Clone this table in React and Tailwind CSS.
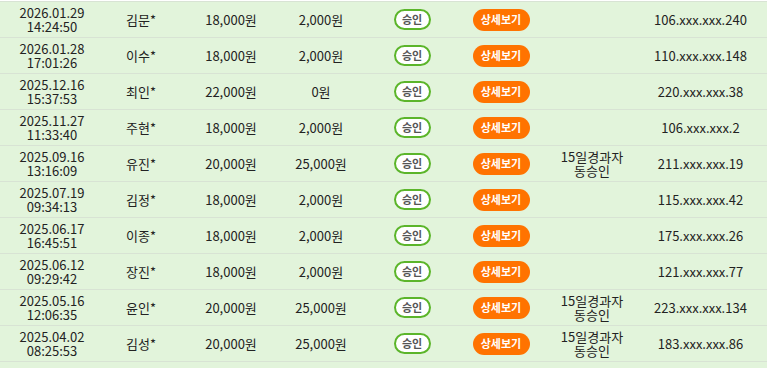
import React from 'react';

const rows = [
  { date: '2026.01.29', time: '14:24:50', name: '김문*', amount: '18,000원', point: '2,000원', note: false, ip: '106.xxx.xxx.240' },
  { date: '2026.01.28', time: '17:01:26', name: '이수*', amount: '18,000원', point: '2,000원', note: false, ip: '110.xxx.xxx.148' },
  { date: '2025.12.16', time: '15:37:53', name: '최인*', amount: '22,000원', point: '0원', note: false, ip: '220.xxx.xxx.38' },
  { date: '2025.11.27', time: '11:33:40', name: '주현*', amount: '18,000원', point: '2,000원', note: false, ip: '106.xxx.xxx.2' },
  { date: '2025.09.16', time: '13:16:09', name: '유진*', amount: '20,000원', point: '25,000원', note: true, ip: '211.xxx.xxx.19' },
  { date: '2025.07.19', time: '09:34:13', name: '김정*', amount: '18,000원', point: '2,000원', note: false, ip: '115.xxx.xxx.42' },
  { date: '2025.06.17', time: '16:45:51', name: '이종*', amount: '18,000원', point: '2,000원', note: false, ip: '175.xxx.xxx.26' },
  { date: '2025.06.12', time: '09:29:42', name: '장진*', amount: '18,000원', point: '2,000원', note: false, ip: '121.xxx.xxx.77' },
  { date: '2025.05.16', time: '12:06:35', name: '윤인*', amount: '20,000원', point: '25,000원', note: true, ip: '223.xxx.xxx.134' },
  { date: '2025.04.02', time: '08:25:53', name: '김성*', amount: '20,000원', point: '25,000원', note: true, ip: '183.xxx.xxx.86' },
];

const Row = ({ row }) => (
  <div className="grid grid-cols-[104px_74px_106px_74px_108px_70px_112px_119px] h-[36px] items-center border-b border-[#d8e3d4] text-center text-[13px] text-[#222]">
    <div className="leading-[14px]">
      <div>{row.date}</div>
      <div>{row.time}</div>
    </div>
    <div>{row.name}</div>
    <div>{row.amount}</div>
    <div>{row.point}</div>
    <div className="flex justify-center">
      <span className="inline-flex items-center justify-center w-[37px] h-[21px] rounded-full border-2 border-[#5bb52a] bg-white text-[11px] text-[#555] font-bold">
        승인
      </span>
    </div>
    <div className="flex justify-center">
      <span className="inline-flex items-center justify-center w-[57px] h-[22px] rounded-full bg-[#ff7300] text-white text-[11px] font-bold">
        상세보기
      </span>
    </div>
    <div className="leading-[14px]">
      {row.note && (
        <>
          <div>15일경과자</div>
          <div>동승인</div>
        </>
      )}
    </div>
    <div className="pr-[14px]">{row.ip}</div>
  </div>
);

export default function App() {
  return (
    <div className="w-[784px] h-[368px] overflow-hidden bg-white pt-px" style={{ fontFamily: '"Noto Sans CJK KR", "Noto Sans", sans-serif' }}>
      <div className="w-[767px] bg-[#e2f4db] border-t border-[#d8e3d4]">
        {rows.map((row, i) => (
          <Row key={i} row={row} />
        ))}
        <div className="h-[20px]" />
      </div>
    </div>
  );
}
